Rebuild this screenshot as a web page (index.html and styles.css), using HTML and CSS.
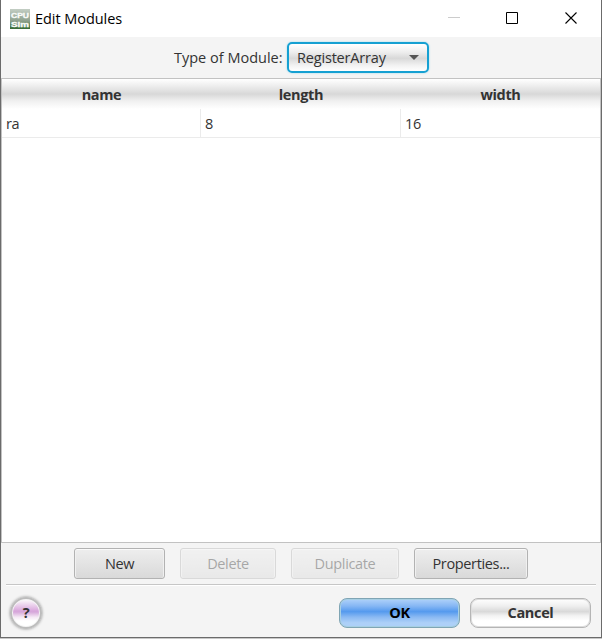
FILE: index.html
```html
<!DOCTYPE html>
<html lang="en">
<head>
<meta charset="utf-8">
<title>Edit Modules</title>
<link rel="stylesheet" href="styles.css">
</head>
<body>
<main class="window">
  <header class="titlebar">
    <svg class="app-icon" width="20" height="20" viewBox="0 0 20 20">
      <defs><linearGradient id="leaf" x1="0" y1="0" x2="0" y2="1"><stop offset="0" stop-color="#c3cec4"/><stop offset=".6" stop-color="#8da08d"/><stop offset="1" stop-color="#356b34"/></linearGradient></defs>
      <rect width="20" height="20" fill="url(#leaf)"/>
      <text x="1" y="8.500" textLength="18" lengthAdjust="spacingAndGlyphs">CPU</text>
      <text x="1" y="17.700" textLength="18" lengthAdjust="spacingAndGlyphs">Sim</text>
    </svg>
    <h1 class="title">Edit Modules</h1>
    <svg class="controls" width="130" height="12" viewBox="0 0 130 12" fill="none">
      <path d="M0 5.5h12" stroke="#ccc"/>
      <path d="M58.500.5h11v11h-11z" stroke="#000"/>
      <path d="M117.500.5l11 11M128.500.5l-11 11" stroke="#000" stroke-width="1.100"/>
    </svg>
  </header>
  <section class="selector">
    <span class="type-label">Type of Module:</span>
    <div class="combo"><span class="combo-text">RegisterArray</span><span class="arrow"></span></div>
  </section>
  <section class="table">
    <div class="row head"><div>name</div><div>length</div><div>width</div></div>
    <div class="row data"><div>ra</div><div>8</div><div>16</div></div>
  </section>
  <section class="actions">
    <button class="btn new">New</button>
    <button class="btn delete" disabled>Delete</button>
    <button class="btn duplicate" disabled>Duplicate</button>
    <button class="btn properties">Properties...</button>
  </section>
  <hr class="rule">
  <footer class="footer">
    <button class="help">?</button>
    <button class="pill ok">OK</button>
    <button class="pill cancel">Cancel</button>
  </footer>
</main>
</body>
</html>
```
FILE: styles.css
```css
* { box-sizing: border-box; }
body { margin: 0; background: #c8c8c8; overflow: hidden; }
button { margin: 0; padding: 0; font: inherit; color: inherit; letter-spacing: inherit; }
.window {
  width: 602px; height: 638px;
  display: flex; flex-direction: column;
  background: #f4f4f4;
  border: 1px solid #6b6b6b; border-top: 0;
  font: 14.5px/20px "Open Sans", "Noto Sans", sans-serif;
  letter-spacing: -0.35px; color: #333; white-space: nowrap;
}
.titlebar { height: 37px; flex: none; display: flex; align-items: center; background: #fff; padding: 0 23px 0 9px; }
.app-icon text { font: bold 8px "Liberation Sans", sans-serif; letter-spacing: 0; fill: #fff; stroke: #f4f7f3; stroke-width: .4px; }
.title { margin: 0 0 0 5px; font-size: 14.5px; font-weight: 400; color: #000; letter-spacing: -0.05px; }
.controls { margin-left: auto; margin-top: -1px; }
.selector { height: 41px; flex: none; display: flex; align-items: center; padding-left: 173px; }
.type-label { width: 113px; letter-spacing: 0; }
.combo {
  width: 142px; height: 31px; display: flex; align-items: center; justify-content: space-between;
  padding: 0 8px 0 8px; border: 2px solid #15a0d2; border-radius: 5px; letter-spacing: -0.18px;
  background: linear-gradient(#fff 0%, #eee 30%, #d8d8d8 53%, #f1f1f1 78%, #fff 100%);
  box-shadow: 0 0 2px #8bd3ec;
}
.arrow { border: 5px solid transparent; border-top: 5px solid #555; border-bottom: 0; }
.table { height: 465px; flex: none; background: #fff; border: 1px solid #c2c2c2; }
.row { display: grid; grid-template-columns: 199px 200px 1fr; }
.head {
  height: 30px; line-height: 31px; text-align: center; font-weight: 700; letter-spacing: -0.35px;
  background: linear-gradient(#fff 0%, #ececec 25%, #d8d8d8 50%, #f0f0f0 73%, #fff 100%);
}
.data { height: 29px; line-height: 29px; border-bottom: 1px solid #ebebeb; }
.data div { padding-left: 4px; border-right: 1px solid #ebebeb; }
.data div:last-child { border-right: 0; }
.actions { height: 41px; flex: none; display: flex; padding: 5px 0 0 73px; }
.btn {
  height: 31px; margin-right: 15px; border: 1px solid #b2b2b2; border-radius: 3px;
  background: linear-gradient(#eee, #d9d9d9); box-shadow: inset 0 1px #fafafa, inset 1px 0 #f0f0f0, inset -1px 0 #f0f0f0;
}
.btn:disabled { opacity: .4; }
.new { width: 91px; }
.delete { width: 96px; }
.duplicate { width: 108px; }
.properties { width: 114px; }
.rule { width: 590px; height: 2px; flex: none; margin: 0 0 0 5px; border: 0; border-top: 1px solid #c6c6c6; background: #fff; }
.footer { display: flex; align-items: center; height: 51px; padding: 2px 10px 0 9px; font-weight: 700; }
.help {
  width: 32px; height: 32px; margin-right: auto; border: 2px solid #bcbcbc; border-radius: 50%;
  background: linear-gradient(#fbf6fb 4%, #d9a7dc 42%, #d6a6da 46%, #f5e9f5 65%, #fff 78%);
  box-shadow: inset 0 0 0 1px #f4f4f4, 0 0 3px #888;
}
.pill { width: 121px; height: 30px; margin-left: 10px; border-radius: 8px; }
.ok {
  color: #000; border: 1px solid #80a5b4;
  background: linear-gradient(#b0d2fa 0%, #86b7f4 25%, #559aee 45%, #8bbaf3 65%, #add0f8 85%);
  box-shadow: inset 0 0 0 1px #a7cfe3;
}
.cancel {
  border: 1px solid #b5b5b5;
  background: linear-gradient(#fff 0%, #efefef 25%, #d9d9d9 45%, #f3f3f3 60%, #fff 78%);
  box-shadow: inset 0 0 0 1px #ddd;
}
```
